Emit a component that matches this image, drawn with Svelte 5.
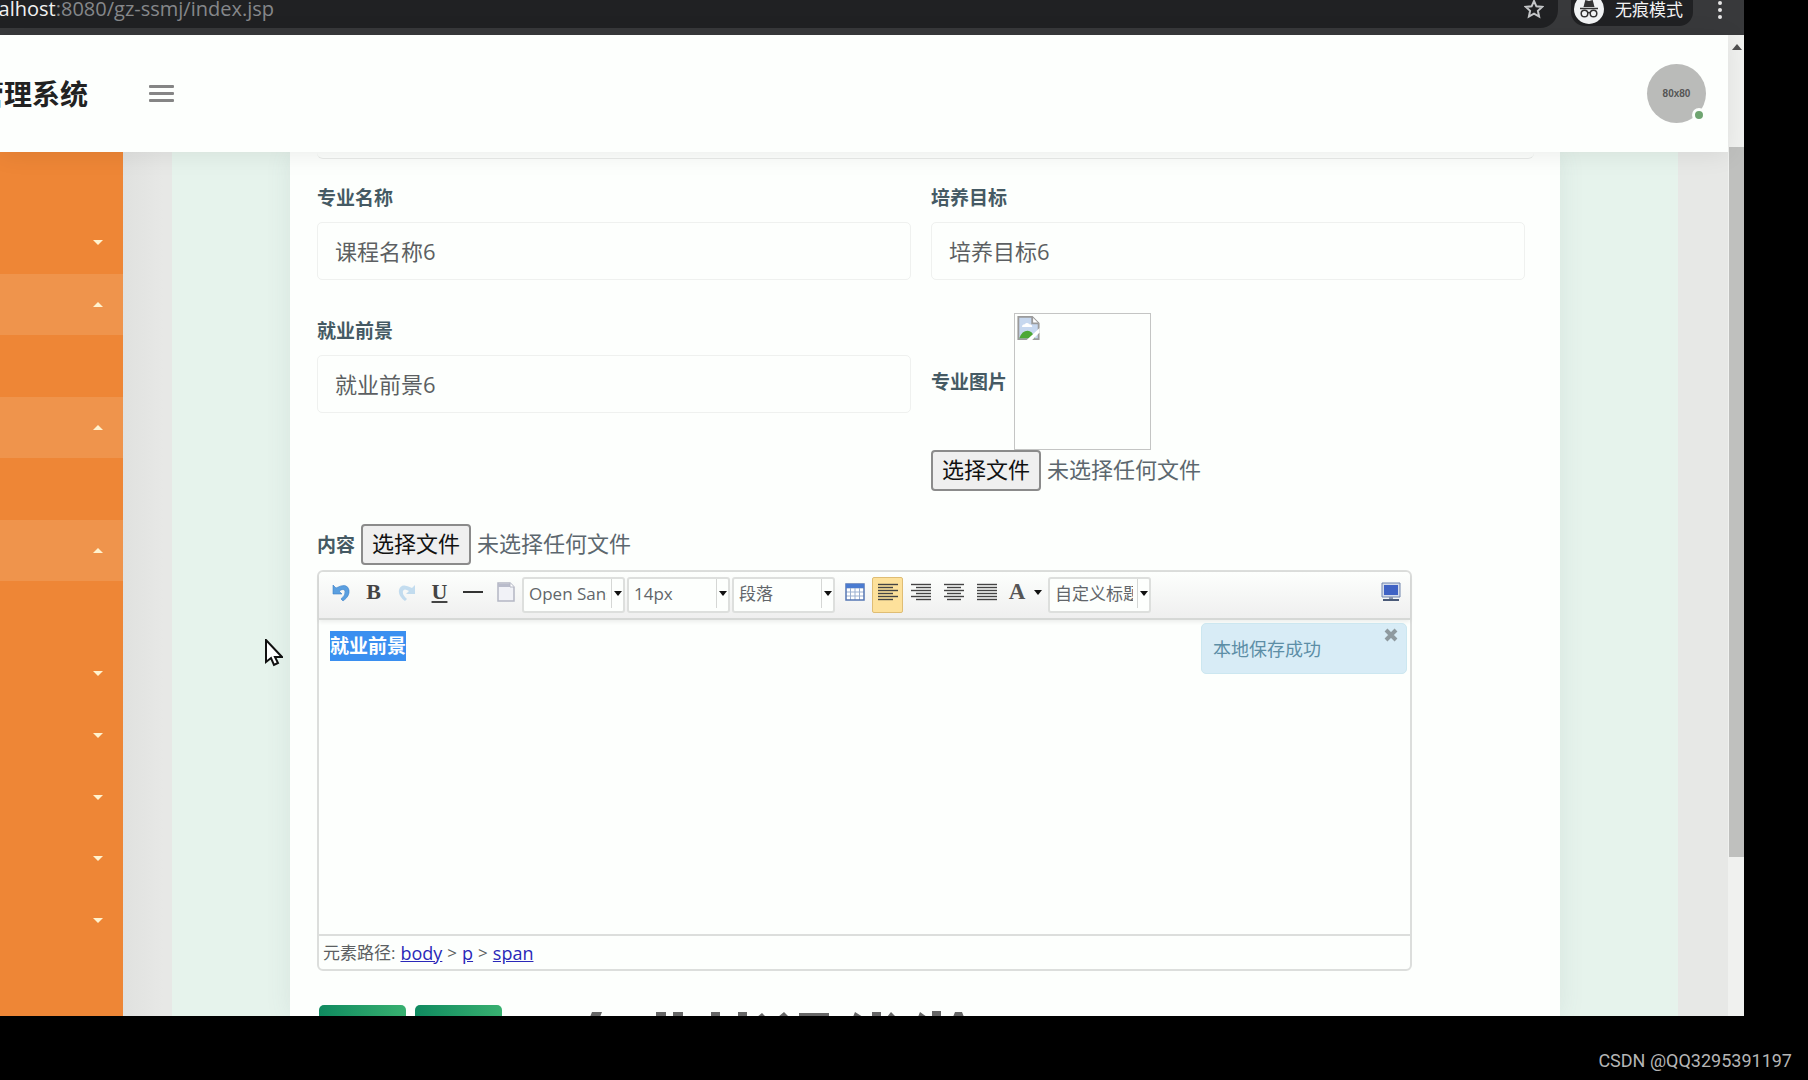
<script>
  const menu = [
    { state: 'closed' },
    { state: 'open' },
    { state: 'child' },
    { state: 'open' },
    { state: 'child' },
    { state: 'open' },
    { state: 'child' },
    { state: 'closed' },
    { state: 'closed' },
    { state: 'closed' },
    { state: 'closed' },
    { state: 'closed' }
  ];

  const alignments = [
    { label: '居左对齐', active: true, lines: [[0, 20], [0, 15], [0, 20], [0, 15], [0, 20], [0, 15]] },
    { label: '居右对齐', active: false, lines: [[0, 20], [5, 20], [0, 20], [5, 20], [0, 20], [5, 20]] },
    { label: '居中对齐', active: false, lines: [[0, 20], [3, 17], [0, 20], [3, 17], [0, 20], [3, 17]] },
    { label: '两端对齐', active: false, lines: [[0, 20], [0, 20], [0, 20], [0, 20], [0, 20], [0, 20]] }
  ];

  let name = $state('课程名称6');
  let goal = $state('培养目标6');
  let prospect = $state('就业前景6');
  let pictureInput;
  let contentInput;
</script>

{#snippet combo(label, value)}
  <span class="combo">
    <select aria-label={label}>
      <option>{value}</option>
    </select>
    <svg class="arrow" viewBox="0 0 8 5" aria-hidden="true"><path d="M0 0h8L4 5z" /></svg>
  </span>
{/snippet}

<div class="stage">
  <div class="browser">
    <div class="chrome">
      <div class="omnibox">
        <div class="url"><span><b>localhost</b>:8080/gz-ssmj/index.jsp</span></div>
        <button class="star" aria-label="收藏">
          <svg viewBox="0 0 20 20"><path d="M10 2l2.4 5.3 5.8.6-4.3 3.9 1.2 5.7L10 14.600l-5.100 2.900 1.200-5.700L1.800 7.900l5.800-.6z" fill="none" stroke="#c4c6c8" stroke-width="2" /></svg>
        </button>
      </div>
      <div class="incognito">
        <svg viewBox="0 0 30 30" aria-hidden="true">
          <circle cx="15" cy="15" r="15" fill="#f1f3f4" />
          <path d="M9.500 13l1.800-7 3.700 1 3.700-1 1.800 7z" fill="#333" />
          <path d="M6 14.500h18" stroke="#333" stroke-width="1.500" />
          <g fill="none" stroke="#333" stroke-width="1.500"><circle cx="10.500" cy="19.500" r="3.300" /><circle cx="19.500" cy="19.500" r="3.300" /><path d="M13.800 19q1.200-.8 2.400 0" /></g>
        </svg>
        <span>无痕模式</span>
      </div>
      <button class="more" aria-label="更多">
        <svg viewBox="0 0 4 20"><circle cx="2" cy="3" r="2" /><circle cx="2" cy="10" r="2" /><circle cx="2" cy="17" r="2" /></svg>
      </button>
    </div>

    <div class="page">
      <div class="view">
        <header>
          <h1><span>管理系统</span></h1>
          <button class="burger" aria-label="菜单"><i></i><i></i><i></i></button>
          <div class="avatar"><span>80x80</span><i class="online"></i></div>
        </header>

        <div class="body">
          <nav aria-label="侧边栏">
            {#each menu as item}
              <button class="item {item.state}" aria-label="菜单项">
                {#if item.state !== 'child'}
                  <svg viewBox="0 0 10 5"><path d={item.state === 'open' ? 'M0 5h10L5 0z' : 'M0 0h10L5 5z'} /></svg>
                {/if}
              </button>
            {/each}
          </nav>

          <main>
            <div class="mint">
              <form class="card">
                <div class="rule"></div>
                <div class="grid">
                  <div class="field">
                    <label for="name">专业名称</label>
                    <input id="name" type="text" bind:value={name} />
                  </div>
                  <div class="field">
                    <label for="goal">培养目标</label>
                    <input id="goal" type="text" bind:value={goal} />
                  </div>
                  <div class="field lower">
                    <label for="prospect">就业前景</label>
                    <input id="prospect" type="text" bind:value={prospect} />
                  </div>
                  <div>
                    <div class="picture">
                      <label for="picture">专业图片</label>
                      <div class="broken">
                        <svg viewBox="0 0 24 26" aria-hidden="true">
                          <path d="M1 1h15l7 7v17H1z" fill="#c7d8ef" stroke="#9b9b9b" stroke-width="2" />
                          <path d="M16 1v7h7" fill="#fff" stroke="#9b9b9b" stroke-width="2" />
                          <path d="M5 12q0-3 3-3 2-3 5 0 3 0 3 3z" fill="#fff" />
                          <path d="M2 24q3-8 9-8 5 0 8 8z" fill="#4ca836" />
                          <path d="M10 26L24 13v5l-8 8z" fill="#fff" />
                        </svg>
                      </div>
                    </div>
                    <div class="file">
                      <input id="picture" type="file" hidden bind:this={pictureInput} />
                      <button type="button" onclick={() => pictureInput.click()}>选择文件</button>
                      <span>未选择任何文件</span>
                    </div>
                  </div>
                </div>

                <div class="file content">
                  <label for="content">内容</label>
                  <input id="content" type="file" hidden bind:this={contentInput} />
                  <button type="button" onclick={() => contentInput.click()}>选择文件</button>
                  <span>未选择任何文件</span>
                </div>

                <section class="editor">
                  <div class="toolbar">
                    <button type="button" class="tool" aria-label="撤销">
                      <svg class="wide" viewBox="0 0 20 20"><path d="M2 3v9h9L8 9q5-3 6 0 1 4-4 8l2 2q7-5 6-11Q16 0 5 6z" fill="#5a9fe0" stroke="#3c82c8" stroke-width=".6" /></svg>
                    </button>
                    <button type="button" class="tool serif" aria-label="加粗">B</button>
                    <button type="button" class="tool faded" aria-label="重做">
                      <svg class="wide" viewBox="0 0 20 20"><path d="M18 3v9H9l3-3q-5-3-6 0-1 4 4 8l-2 2Q1 14 2 8 4 0 15 6z" fill="#8fc1e8" /></svg>
                    </button>
                    <button type="button" class="tool serif under" aria-label="下划线">U</button>
                    <button type="button" class="tool" aria-label="分隔线">
                      <svg class="wide" viewBox="0 0 20 20"><path d="M0 10h20" stroke="#333" stroke-width="2" /></svg>
                    </button>
                    <button type="button" class="tool" aria-label="清空文档">
                      <svg class="wide" viewBox="0 0 20 20"><path d="M2 1h12l4 4v14H2z" fill="#f1f2f7" stroke="#b4b7c4" stroke-width="1.500" /><path d="M2 2h12v3H2z" fill="#b9bccb" /><path d="M14 1v4h4" fill="#fff" stroke="#b4b7c4" /></svg>
                    </button>
                    {@render combo('字体', 'Open Sans')}
                    {@render combo('字号', '14px')}
                    {@render combo('段落格式', '段落')}
                    <button type="button" class="tool table" aria-label="插入表格">
                      <svg class="wide" viewBox="0 0 20 20"><path d="M1 2h18v16H1z" fill="#fff" /><path d="M1 6h18M1 10h18M1 14h18M5.500 6v12M10 6v12M14.500 6v12" stroke="#9bb0d0" /><path d="M1 2h18v16H1z" fill="none" stroke="#5577b4" stroke-width="1.500" /><path d="M1 2h18v4H1z" fill="#4a7bd0" /></svg>
                    </button>
                    {#each alignments as align}
                      <button type="button" class="tool align" class:active={align.active} aria-label={align.label}>
                        <svg class="wide" viewBox="0 0 20 20">
                          {#each align.lines as [from, to], i}
                            <path d="M{from} {2.5 + i * 3}H{to}" stroke="#444" stroke-width="1.400" />
                          {/each}
                        </svg>
                      </button>
                    {/each}
                    <button type="button" class="tool color" aria-label="字体颜色">
                      <span>A</span>
                      <svg class="arrow" viewBox="0 0 8 5"><path d="M0 0h8L4 5z" /></svg>
                    </button>
                    {@render combo('自定义标题', '自定义标题')}
                    <button type="button" class="tool screen" aria-label="全屏">
                      <svg class="wide" viewBox="0 0 20 20"><path d="M1 1h18v14H1z" fill="#d5dcea" stroke="#7185ae" /><path d="M3 3h14v10H3z" fill="#3f62c4" /><path d="M8 15h4v2H8z" fill="#8794ad" /><path d="M2 18h16" stroke="#4a5a78" stroke-width="2" /></svg>
                    </button>
                  </div>

                  <div class="canvas">
                    <div class="text" contenteditable="true" role="textbox" tabindex="0" aria-label="内容"><p><span>就业前景</span></p></div>
                    <div class="notice">
                      <span>本地保存成功</span>
                      <button type="button" aria-label="关闭"><svg viewBox="0 0 14 14"><path d="M2 2l10 10M12 2L2 12" stroke="#8f9a9f" stroke-width="4" /></svg></button>
                    </div>
                  </div>

                  <div class="path">
                    <span>元素路径:</span>
                    <a href="#body">body</a><span>&gt;</span><a href="#p">p</a><span>&gt;</span><a href="#span">span</a>
                  </div>
                </section>

                <div class="actions">
                  <button type="button" aria-label="提交"></button>
                  <button type="button" aria-label="返回"></button>
                  <svg class="peek" viewBox="0 0 380 6" aria-hidden="true">
                    <path d="M3 1h10l-2 5H1zM67 1h10v5H67zM84 1h10v5H84zM122 1h9v5h-9zM149 1h9v5h-9zM168 6l5-4 4 4zM189 6l6-5 5 5zM210 2h30v3h-30zM264 6l2-5 8 5zM283 1h9v5h-9zM298 6l4-5 5 5zM329 6l2-5 7 5zM343 0h9v6h-9zM364 6l2-5h7l2 5z" />
                  </svg>
                </div>
              </form>
            </div>
          </main>
        </div>
      </div>

      <div class="scrollbar" aria-hidden="true">
        <svg viewBox="0 0 10 6"><path d="M0 6h10L5 0z" fill="#505050" /></svg>
        <div class="thumb"></div>
      </div>
    </div>
  </div>
  <footer>CSDN @QQ3295391197</footer>

  <svg class="cursor" viewBox="0 0 18 28" aria-hidden="true">
    <path d="M1 1v22l5-4 3 7 4-2-3-6h7z" fill="#fff" stroke="#111" stroke-width="2" />
  </svg>
</div>

<style>
  :global(body) {
    margin: 0;
    background: #000;
  }

  .stage {
    position: relative;
    height: 100vh;
    box-sizing: border-box;
    padding-right: 64px;
    display: flex;
    flex-direction: column;
    overflow: hidden;
    background: #000;
    font-family: 'Open Sans', 'Noto Sans CJK SC', sans-serif;
    color: #555;
  }

  .stage :global(*) {
    box-sizing: border-box;
  }

  button {
    padding: 0;
    border: 0;
    background: none;
    font: inherit;
    color: inherit;
  }

  svg {
    display: block;
  }

  .browser {
    flex: 1;
    min-height: 0;
    display: flex;
    flex-direction: column;
  }

  /* browser chrome */
  .chrome {
    flex: none;
    height: 35px;
    display: flex;
    align-items: flex-start;
    background: #38393b;
    overflow: hidden;
  }

  .omnibox {
    flex: 1;
    height: 28px;
    display: flex;
    align-items: center;
    justify-content: space-between;
    padding-right: 14px;
    border-radius: 0 0 18px 0;
    background: #202123;
  }

  .url {
    width: 274px;
    height: 28px;
    display: flex;
    justify-content: flex-end;
    overflow: hidden;
    white-space: nowrap;
    font-size: 20px;
    line-height: 18px;
    color: #85878a;
  }

  .url b {
    font-weight: 400;
    color: #f1f1f1;
  }

  .star svg {
    width: 20px;
    height: 20px;
    margin-bottom: 10px;
  }

  .incognito {
    width: 122px;
    height: 26px;
    margin-left: 13px;
    display: flex;
    gap: 11px;
    border-radius: 0 0 14px 14px;
    background: #202123;
    font-size: 17px;
    line-height: 20px;
    color: #f3f3f3;
    white-space: nowrap;
  }

  .incognito svg {
    flex: none;
    width: 30px;
    height: 30px;
    margin-top: -6px;
    margin-left: 3px;
  }

  .more {
    margin: 0 22px 0 25px;
  }

  .more svg {
    width: 4px;
    height: 20px;
    fill: #e6e6e6;
  }

  /* page */
  .page {
    flex: 1;
    min-height: 0;
    display: flex;
    background: #fdfffd;
  }

  .view {
    flex: 1;
    min-width: 0;
    display: flex;
    flex-direction: column;
  }

  header {
    position: relative;
    z-index: 2;
    flex: none;
    height: 117px;
    display: flex;
    align-items: center;
    background: #fdfffd;
    box-shadow: 0 2px 24px rgba(0, 0, 0, 0.08);
  }

  h1 {
    width: 88px;
    margin: 0;
    display: flex;
    justify-content: flex-end;
    overflow: hidden;
    white-space: nowrap;
    font-size: 28px;
    line-height: 40px;
    font-weight: 700;
    color: #222;
  }

  .burger {
    width: 25px;
    margin-left: 61px;
    display: grid;
    gap: 4px;
  }

  .burger i {
    height: 3px;
    border-radius: 1px;
    background: #858585;
  }

  .avatar {
    position: relative;
    width: 59px;
    height: 59px;
    margin-left: auto;
    margin-right: 22px;
    display: grid;
    place-items: center;
    border-radius: 50%;
    background: #babbb9;
    font-family: 'Liberation Sans', sans-serif;
    font-size: 10px;
    font-weight: 700;
    color: #555;
  }

  .online {
    position: absolute;
    right: 0;
    bottom: 1px;
    width: 14px;
    height: 14px;
    border: 3px solid #fdfffd;
    border-radius: 50%;
    background: #6fa571;
  }

  .body {
    flex: 1;
    min-height: 0;
    display: flex;
  }

  nav {
    width: 123px;
    padding: 60px 0 65px;
    display: grid;
    grid-template-rows: repeat(12, 1fr);
    background: #ee8636;
  }

  .item {
    display: flex;
    align-items: center;
    justify-content: flex-end;
    padding-right: 20px;
  }

  .item.open {
    background: #ef944c;
  }

  .item svg {
    width: 10px;
    height: 5px;
    fill: #fff3cf;
  }

  main {
    flex: 1;
    min-width: 0;
    display: flex;
    padding: 0 50px 0 49px;
    background: linear-gradient(90deg, #e0e1df, #e7e8e6 40px);
  }

  .mint {
    flex: 1;
    min-width: 0;
    padding: 0 118px;
    background: #e6f3ec;
    overflow: hidden;
  }

  .card {
    height: 100%;
    padding: 0 35px 0 27px;
    background: #fdfffd;
    box-shadow: 0 0 24px rgba(80, 110, 120, 0.1);
  }

  .rule {
    height: 7px;
    margin: 0 -9px 25px 0;
    border-bottom: 1px solid #e9ebe9;
    border-radius: 0 0 6px 6px;
  }

  .grid {
    display: grid;
    grid-template-columns: 1fr 1fr;
    column-gap: 20px;
    row-gap: 33px;
  }

  .field {
    display: flex;
    flex-direction: column;
    gap: 10px;
  }

  .field.lower {
    padding-top: 4px;
  }

  label {
    font-size: 19px;
    line-height: 28px;
    font-weight: 700;
    color: #455a64;
    white-space: nowrap;
  }

  .field input {
    width: 100%;
    height: 58px;
    padding: 0 17px 2px;
    border: 1px solid #eff1ef;
    border-radius: 5px;
    background: transparent;
    font: inherit;
    font-size: 22px;
    color: #5c5f62;
    outline: none;
  }

  .picture {
    display: flex;
    align-items: center;
    gap: 7px;
  }

  .broken {
    width: 137px;
    height: 137px;
    padding: 2px;
    border: 1px solid #c4c5c4;
  }

  .broken svg {
    width: 23px;
    height: 24px;
  }

  .file {
    display: flex;
    align-items: center;
    gap: 6px;
    font-size: 22px;
    line-height: 32px;
    color: #5c676e;
    white-space: nowrap;
  }

  .file span {
    padding-bottom: 3px;
  }

  .file button {
    width: 110px;
    height: 41px;
    padding-bottom: 3px;
    border: 2px solid #8b8b8b;
    border-radius: 4px;
    background: #efefef;
    color: #111;
  }

  .file.content {
    margin-top: 33px;
  }

  /* rich text editor */
  .editor {
    margin: 5px 113px 0 0;
    border: 2px solid #dcdedc;
    border-radius: 6px;
  }

  .toolbar {
    height: 48px;
    padding: 5px 7px 7px 5px;
    display: flex;
    align-items: flex-start;
    border-bottom: 2px solid #d6d8d6;
    border-radius: 5px 5px 0 0;
    background: linear-gradient(#fdfffd, #efefef);
    box-shadow: 0 2px 4px rgba(0, 0, 0, 0.07);
  }

  .tool {
    flex: none;
    width: 33px;
    height: 36px;
    padding-bottom: 6px;
    display: grid;
    place-items: center;
  }

  .wide {
    width: 20px;
    height: 20px;
  }

  .serif {
    font-family: 'Liberation Serif', serif;
    font-size: 22px;
    line-height: 26px;
    font-weight: 700;
    color: #444;
  }

  .under {
    text-decoration: underline;
  }

  .faded {
    opacity: 0.5;
  }

  .combo {
    position: relative;
    flex: none;
    width: 103px;
    height: 36px;
    margin-right: 2px;
    display: flex;
    border: 2px solid #dddfdd;
    border-radius: 3px;
    background: #fdfffd;
  }

  .combo select {
    appearance: none;
    width: 88px;
    height: 29px;
    padding: 0 4px 0 5px;
    border: 0;
    border-right: 1px solid #d5d7d5;
    background: none;
    font: inherit;
    font-size: 17px;
    color: #62666a;
    text-overflow: clip;
    outline: none;
  }

  .arrow {
    width: 8px;
    height: 5px;
    fill: #111;
  }

  .combo .arrow {
    margin: 12px 0 0 2px;
  }

  .table {
    width: 35px;
  }

  .align.active {
    width: 31px;
    margin-right: 1px;
    border: 1px solid #dfbd74;
    border-radius: 2px;
    background: #fde19b;
    padding-bottom: 6px;
  }

  .color {
    width: 45px;
    display: flex;
    align-items: center;
    justify-content: center;
    gap: 9px;
    font-family: 'Liberation Serif', serif;
    font-size: 23px;
    line-height: 26px;
    font-weight: 700;
    color: #555;
  }

  .screen {
    margin-left: auto;
    width: 24px;
  }

  .canvas {
    position: relative;
    height: 314px;
  }

  .text {
    height: 100%;
    padding: 11px;
    outline: none;
  }

  .text p {
    margin: 0;
    font-size: 19px;
    line-height: 30px;
    font-weight: 700;
  }

  .text span {
    display: inline-block;
    background: #3a8ff0;
    color: #fff;
  }

  .notice {
    position: absolute;
    top: 3px;
    right: 3px;
    width: 206px;
    height: 51px;
    padding: 4px 8px 0 11px;
    display: flex;
    justify-content: space-between;
    align-items: flex-start;
    border: 1px solid #cce7f0;
    border-radius: 5px;
    background: #d8ecf6;
    font-size: 18px;
    line-height: 42px;
    color: #5c8ea6;
  }

  .notice svg {
    width: 14px;
    height: 14px;
  }

  .path {
    height: 35px;
    padding-left: 4px;
    display: flex;
    align-items: center;
    gap: 5px;
    border-top: 2px solid #dcdedc;
    font-size: 17px;
    line-height: 24px;
    color: #5c5f62;
  }

  .path a {
    color: #2a28b8;
    font-size: 18px;
  }

  .actions {
    display: flex;
    align-items: flex-start;
    gap: 9px;
    padding-left: 2px;
    margin-top: 34px;
  }

  .actions button {
    flex: none;
    width: 87px;
    height: 48px;
    border-radius: 5px;
    background: linear-gradient(90deg, #0f8a5f, #38b070);
  }

  .peek {
    width: 380px;
    height: 6px;
    margin: 6px 0 0 78px;
    fill: #666;
  }

  .scrollbar {
    flex: none;
    width: 16px;
    padding: 9px 0 0 1px;
    display: flex;
    flex-direction: column;
    align-items: center;
    background: #f0f1ef;
  }

  .scrollbar svg {
    width: 10px;
    height: 6px;
  }

  .thumb {
    width: 100%;
    height: 73%;
    margin-top: 97px;
    background: #bfc0be;
  }

  footer {
    flex: none;
    height: 64px;
    margin-right: -64px;
    padding: 12px 16px 0 0;
    text-align: right;
    font-family: Roboto, sans-serif;
    font-size: 18px;
    line-height: 66px;
    color: #b5b5b5;
  }

  .cursor {
    position: absolute;
    left: 265px;
    top: 639px;
    width: 18px;
    height: 28px;
    z-index: 3;
  }
</style>
